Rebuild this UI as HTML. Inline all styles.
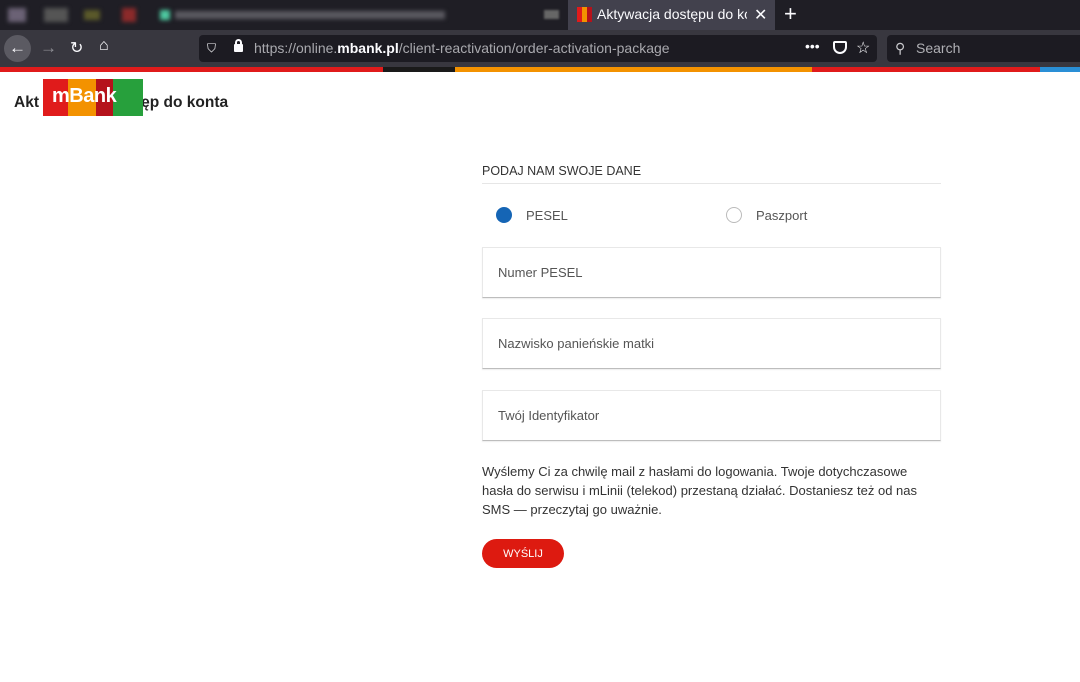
<!DOCTYPE html>
<html><head><meta charset="utf-8"><style>
*{margin:0;padding:0;box-sizing:border-box}
body{width:1080px;height:682px;overflow:hidden;background:#fff;font-family:"Liberation Sans",sans-serif;position:relative}
.abs{position:absolute}
.tabbar{left:0;top:0;width:1080px;height:30px;background:#1f1e25}
.nav{left:0;top:30px;width:1080px;height:37px;background:#38373f}
.url{left:199px;top:35px;width:678px;height:27px;background:#1c1b22;border-radius:4px}
.search{left:887px;top:35px;width:193px;height:27px;background:#1c1b22;border-radius:4px 0 0 4px}
.ff{color:#fbfbfe;font-size:14px}
.field{left:482px;width:459px;height:51px;border:1px solid #e8e8e8;border-bottom:1px solid #bdbdbd;font-size:13px;color:#555;padding:17px 0 0 15px;box-shadow:0 1px 1px rgba(0,0,0,.08)}
</style></head><body>
<div class="abs tabbar"></div>
<div class="abs" style="left:8px;top:8px;width:18px;height:14px;background:#6b6275;filter:blur(2px)"></div>
<div class="abs" style="left:44px;top:8px;width:24px;height:14px;background:#555;filter:blur(2px)"></div>
<div class="abs" style="left:84px;top:10px;width:16px;height:10px;background:#5b5a2a;filter:blur(2px)"></div>
<div class="abs" style="left:122px;top:8px;width:14px;height:14px;background:#8b2a2a;filter:blur(2px)"></div>
<div class="abs" style="left:160px;top:10px;width:10px;height:10px;background:#4ec9a0;filter:blur(2px)"></div>
<div class="abs" style="left:175px;top:11px;width:270px;height:8px;background:#5a5960;filter:blur(2px)"></div>
<div class="abs" style="left:544px;top:10px;width:15px;height:9px;background:#666;filter:blur(1px)"></div>
<div class="abs" style="left:568px;top:0;width:207px;height:30px;background:#42414d"></div>
<div class="abs" style="left:577px;top:7px;width:15px;height:15px;background:linear-gradient(90deg,#e01b1b 33%,#f39200 33% 66%,#b5121b 66%)"></div>
<div class="abs ff" style="left:597px;top:6px;font-size:14px;white-space:nowrap;width:150px;overflow:hidden">Aktywacja dostępu do konta</div>
<div class="abs ff" style="left:754px;top:5px;font-size:16px">✕</div>
<div class="abs ff" style="left:784px;top:1px;font-size:22px">+</div>
<div class="abs nav"></div>
<div class="abs" style="left:4px;top:35px;width:27px;height:27px;border-radius:50%;background:#5b5a62"></div>
<div class="abs ff" style="left:9px;top:38px;font-size:17px">←</div>
<div class="abs" style="left:40px;top:38px;font-size:17px;color:#8f8f95">→</div>
<div class="abs ff" style="left:70px;top:38px;font-size:16px">↻</div>
<div class="abs ff" style="left:99px;top:37px;font-size:16px">⌂</div>
<div class="abs url"></div>
<div class="abs ff" style="left:207px;top:41px;font-size:12px">⛉</div>
<div class="abs" style="left:234px;top:44px;width:9px;height:8px;background:#fbfbfe;border-radius:1px"></div>
<div class="abs" style="left:235px;top:39px;width:7px;height:7px;border:2px solid #fbfbfe;border-bottom:none;border-radius:4px 4px 0 0"></div>
<div class="abs" style="left:254px;top:40px;font-size:14px;color:#a9a9ae;white-space:nowrap">https://online.<b style="color:#fbfbfe">mbank.pl</b>/client-reactivation/order-activation-package</div>
<div class="abs ff" style="left:805px;top:38px;font-size:14px">•••</div>
<div class="abs" style="left:833px;top:41px;width:14px;height:13px;border:2px solid #fbfbfe;border-radius:2px 2px 7px 7px"></div>
<div class="abs ff" style="left:856px;top:38px;font-size:16px">☆</div>
<div class="abs search"></div>
<div class="abs" style="left:895px;top:40px;font-size:14px;color:#c8c8cc">⚲</div>
<div class="abs" style="left:916px;top:40px;font-size:14px;color:#b0b0b5">Search</div>
<div class="abs" style="left:0;top:67px;width:1080px;height:5px;background:linear-gradient(90deg,#e01b1b 0 383px,#1a1a1a 383px 455px,#f39200 455px 812px,#e01b1b 812px 1040px,#2a8fd6 1040px)"></div>

<div class="abs" style="left:14px;top:94px;font-size:15.5px;font-weight:bold;color:#222;white-space:nowrap">Akt<span style="display:inline-block;width:97px"></span>tęp do konta</div>
<div class="abs" style="left:43px;top:79px;width:100px;height:37px;background:linear-gradient(90deg,#e01b1b 0 25px,#f39200 25px 53px,#b5121b 53px 70px,#27a03c 70px)"></div>
<div class="abs" style="left:52px;top:85px;font-size:20px;font-weight:bold;color:#fff;letter-spacing:-0.5px">mBank</div>

<div class="abs" style="left:482px;top:164px;font-size:12.5px;color:#333">PODAJ NAM SWOJE DANE</div>
<div class="abs" style="left:482px;top:183px;width:459px;height:1px;background:#e6e6e6"></div>
<div class="abs" style="left:496px;top:207px;width:16px;height:16px;border-radius:50%;background:#1565b5"></div>
<div class="abs" style="left:526px;top:208px;font-size:13px;color:#555">PESEL</div>
<div class="abs" style="left:726px;top:207px;width:16px;height:16px;border-radius:50%;border:1px solid #bbb"></div>
<div class="abs" style="left:756px;top:208px;font-size:13px;color:#555">Paszport</div>
<div class="abs field" style="top:247px">Numer PESEL</div>
<div class="abs field" style="top:318px">Nazwisko panieńskie matki</div>
<div class="abs field" style="top:390px">Twój Identyfikator</div>
<div class="abs" style="left:482px;top:462px;font-size:13px;line-height:19px;color:#333;white-space:nowrap">Wyślemy Ci za chwilę mail z hasłami do logowania. Twoje dotychczasowe<br>hasła do serwisu i mLinii (telekod) przestaną działać. Dostaniesz też od nas<br>SMS — przeczytaj go uważnie.</div>
<div class="abs" style="left:482px;top:539px;width:82px;height:29px;border-radius:15px;background:#dd1a10;color:#fff;font-size:11px;text-align:center;line-height:30px">WYŚLIJ</div>
</body></html>
